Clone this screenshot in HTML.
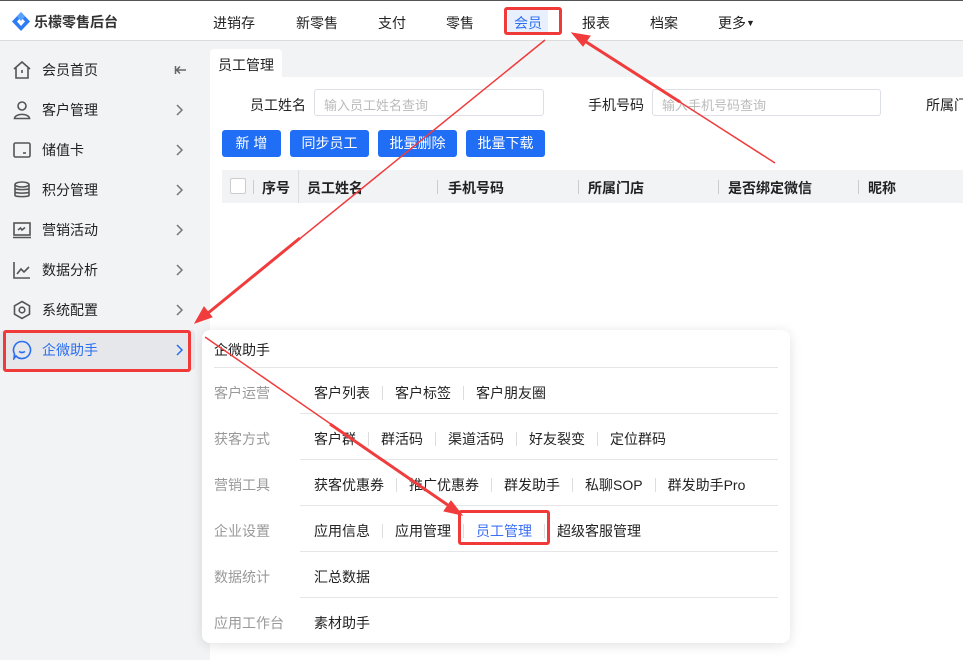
<!DOCTYPE html><html><head><meta charset="utf-8"><style>
*{margin:0;padding:0;box-sizing:border-box}
body{width:963px;height:660px;overflow:hidden;position:relative;background:#f2f3f5;font-family:"Liberation Sans","Noto Sans CJK SC",sans-serif;font-size:14px;color:#222}
.hdr{position:absolute;left:0;top:0;width:963px;height:41px;background:#fff;border-top:1px solid #555;border-bottom:1px solid #dcdcdc}
.nav{position:absolute;top:12px;font-size:14px}
.side{position:absolute;left:0;top:41px;width:210px;height:619px;background:#f2f3f5}
.si{position:absolute;left:0;width:195px;height:40px}
.si span{position:absolute;left:42px;top:10px;font-size:14px}
.si svg.ic{position:absolute;left:12px;top:10px}
.si .ch{position:absolute;left:174px;top:13px}
.main{position:absolute;left:210px;top:77px;width:753px;height:583px;background:#fff}
.tab{position:absolute;left:210px;top:49px;width:72px;height:28px;background:#fff;border-radius:4px 4px 0 0;font-size:14px;padding:6px 0 0 8px}
.lbl{position:absolute;font-size:14px;white-space:nowrap}
.inp{position:absolute;height:27px;border:1px solid #dcdfe6;border-radius:3px;background:#fff;color:#bbb;font-size:13px;padding:5px 0 0 9px}
.btn{position:absolute;top:130px;height:27px;background:#1f6ef5;color:#fff;border-radius:3px;text-align:center;font-size:14px;line-height:27px}
.th{position:absolute;left:222px;top:170px;width:741px;height:33px;background:#f2f3f5;font-weight:bold;font-size:14px}
.th span{position:absolute;top:8px}
.th i{position:absolute;top:10px;width:1px;height:14px;background:#ccc}
.pop{position:absolute;left:202px;top:330px;width:588px;height:313px;background:#fff;border-radius:8px;box-shadow:0 2px 12px rgba(0,0,0,.12)}
.pl{position:absolute;left:12px;font-size:14px;color:#999}
.pr{position:absolute;left:112px;font-size:14px;color:#222;white-space:nowrap}
.pr b{font-weight:normal;display:inline-block;width:1px;height:14px;background:#ddd;margin:0 12px;vertical-align:-2px}
.ln{position:absolute;height:1px;background:#e6e6e6;right:12px}
</style></head><body>
<div class="hdr">
<svg style="position:absolute;left:12px;top:11px" width="18" height="19" viewBox="0 0 18 19"><path d="M9 0L18 9.5 9 19 0 9.5Z" fill="#2d7cf6"/><path d="M9 5L13 9.5 9 14 5 9.5Z" fill="#fff"/><path d="M9 0L13 4.5 9 9 5 4.5Z" fill="#5aa0ff"/></svg>
<div style="position:absolute;left:34px;top:11px;font-size:14px;font-weight:bold;color:#333">乐檬零售后台</div>
<div class="nav" style="left:213px">进销存</div><div class="nav" style="left:296px">新零售</div><div class="nav" style="left:378px">支付</div><div class="nav" style="left:446px">零售</div>
<div style="position:absolute;left:508px;top:7px;width:40px;height:24px;background:#e8f0fe"></div>
<div class="nav" style="left:514px;color:#2d6ff2">会员</div><div class="nav" style="left:582px">报表</div><div class="nav" style="left:650px">档案</div><div class="nav" style="left:718px">更多<span style="font-size:9px;vertical-align:2px">▼</span></div>
<div style="position:absolute;left:504px;top:6px;width:58px;height:28px;border:3px solid #f03a3a;border-radius:3px"></div>
</div>
<div class="side">
<div class="si" style="top:9px"><svg class="ic" width="20" height="20" viewBox="0 0 20 20" fill="none" stroke="#555" stroke-width="1.6"><path d="M2 9L10 2 18 9M4 7.5V18H16V7.5"/><path d="M10 10V13"/></svg><span>会员首页</span><svg class="ch" width="14" height="14" viewBox="0 0 14 14" fill="none" stroke="#666" stroke-width="1.5"><path d="M12 7H3M6 3.5L2.5 7 6 10.5M1.5 3V11"/></svg></div>
<div class="si" style="top:49px"><svg class="ic" width="20" height="20" viewBox="0 0 20 20" fill="none" stroke="#555" stroke-width="1.6"><circle cx="10" cy="6" r="4"/><path d="M2.5 18.5C3 13 17 13 17.5 18.5Z"/></svg><span>客户管理</span><svg class="ch" width="10" height="14" viewBox="0 0 10 14" fill="none" stroke="#777" stroke-width="1.5"><path d="M3 2L8 7 3 12"/></svg></div>
<div class="si" style="top:89px"><svg class="ic" width="20" height="20" viewBox="0 0 20 20" fill="none" stroke="#555" stroke-width="1.6"><rect x="2" y="3" width="16" height="14" rx="1.5"/><path d="M11 13h3"/></svg><span>储值卡</span><svg class="ch" width="10" height="14" viewBox="0 0 10 14" fill="none" stroke="#777" stroke-width="1.5"><path d="M3 2L8 7 3 12"/></svg></div>
<div class="si" style="top:129px"><svg class="ic" width="20" height="20" viewBox="0 0 20 20" fill="none" stroke="#555" stroke-width="1.6"><ellipse cx="10" cy="4.5" rx="7" ry="2.5"/><path d="M3 4.5V15.5C3 17 17 17 17 15.5V4.5M3 8.5C3 10 17 10 17 8.5M3 12C3 13.5 17 13.5 17 12"/></svg><span>积分管理</span><svg class="ch" width="10" height="14" viewBox="0 0 10 14" fill="none" stroke="#777" stroke-width="1.5"><path d="M3 2L8 7 3 12"/></svg></div>
<div class="si" style="top:169px"><svg class="ic" width="20" height="20" viewBox="0 0 20 20" fill="none" stroke="#555" stroke-width="1.6"><rect x="2" y="3" width="16" height="12"/><path d="M1 17.5H19M6 10L8.5 8 10 10 13 7.5"/></svg><span>营销活动</span><svg class="ch" width="10" height="14" viewBox="0 0 10 14" fill="none" stroke="#777" stroke-width="1.5"><path d="M3 2L8 7 3 12"/></svg></div>
<div class="si" style="top:209px"><svg class="ic" width="20" height="20" viewBox="0 0 20 20" fill="none" stroke="#555" stroke-width="1.6"><path d="M2 2V18H18M5 14L9 9 12 12 17 7"/></svg><span>数据分析</span><svg class="ch" width="10" height="14" viewBox="0 0 10 14" fill="none" stroke="#777" stroke-width="1.5"><path d="M3 2L8 7 3 12"/></svg></div>
<div class="si" style="top:249px"><svg class="ic" width="20" height="20" viewBox="0 0 20 20" fill="none" stroke="#555" stroke-width="1.6"><path d="M10 1.5L17.5 5.8V14.2L10 18.5 2.5 14.2V5.8Z"/><circle cx="10" cy="10" r="2.8"/></svg><span>系统配置</span><svg class="ch" width="10" height="14" viewBox="0 0 10 14" fill="none" stroke="#777" stroke-width="1.5"><path d="M3 2L8 7 3 12"/></svg></div>
<div class="si" style="top:289px;background:#e6e7ea;border-radius:4px"><svg class="ic" width="20" height="20" viewBox="0 0 20 20" fill="none" stroke="#2a6ef0" stroke-width="1.6"><path d="M10 1.5A8.5 8.5 0 1 1 4 16L2 18.5 2.5 14A8.5 8.5 0 0 1 10 1.5Z"/><path d="M7 11.5Q10 13.5 13 11.5"/></svg><span style="color:#2a6ef0">企微助手</span><svg class="ch" width="10" height="14" viewBox="0 0 10 14" fill="none" stroke="#2a6ef0" stroke-width="1.5"><path d="M3 2L8 7 3 12"/></svg></div>
<div style="position:absolute;left:3px;top:289px;width:188px;height:42px;border:3px solid #f03a3a;border-radius:3px"></div>
</div>
<div class="main"></div>
<div class="tab">员工管理</div>
<div class="lbl" style="left:250px;top:95px">员工姓名</div>
<div class="inp" style="left:314px;top:89px;width:230px">输入员工姓名查询</div>
<div class="lbl" style="left:588px;top:95px">手机号码</div>
<div class="inp" style="left:652px;top:89px;width:229px">输入手机号码查询</div>
<div class="lbl" style="left:926px;top:95px">所属门</div>
<div class="btn" style="left:222px;width:59px">新 增</div>
<div class="btn" style="left:290px;width:79px">同步员工</div>
<div class="btn" style="left:378px;width:79px">批量删除</div>
<div class="btn" style="left:466px;width:79px">批量下载</div>
<div class="th">
<div style="position:absolute;left:8px;top:8px;width:16px;height:16px;border:1px solid #ccc;background:#fff;border-radius:2px"></div>
<i style="left:31px"></i><span style="left:40px">序号</span>
<div style="position:absolute;left:76px;top:0;width:1px;height:33px;background:#ddd"></div>
<span style="left:85px">员工姓名</span><i style="left:215px"></i><span style="left:226px">手机号码</span><i style="left:356px"></i><span style="left:366px">所属门店</span><i style="left:496px"></i><span style="left:506px">是否绑定微信</span><i style="left:636px"></i><span style="left:646px">昵称</span>
</div>
<div class="pop">
<div style="position:absolute;left:12px;top:10px;font-size:14px">企微助手</div>
<div class="ln" style="left:12px;top:37px"></div>
<div class="pl" style="top:53px">客户运营</div><div class="pr" style="top:53px">客户列表<b></b>客户标签<b></b>客户朋友圈</div>
<div class="ln" style="left:98px;top:83px"></div>
<div class="pl" style="top:99px">获客方式</div><div class="pr" style="top:99px">客户群<b></b>群活码<b></b>渠道活码<b></b>好友裂变<b></b>定位群码</div>
<div class="ln" style="left:98px;top:129px"></div>
<div class="pl" style="top:145px">营销工具</div><div class="pr" style="top:145px">获客优惠券<b></b>推广优惠券<b></b>群发助手<b></b>私聊SOP<b></b>群发助手Pro</div>
<div class="ln" style="left:98px;top:175px"></div>
<div class="pl" style="top:191px">企业设置</div><div class="pr" style="top:191px">应用信息<b></b>应用管理<b></b><span style="color:#3a6ff5">员工管理</span><b></b>超级客服管理</div>
<div class="ln" style="left:98px;top:221px"></div>
<div class="pl" style="top:237px">数据统计</div><div class="pr" style="top:237px">汇总数据</div>
<div class="ln" style="left:98px;top:267px"></div>
<div class="pl" style="top:283px">应用工作台</div><div class="pr" style="top:283px">素材助手</div>
</div>
<div style="position:absolute;left:458px;top:510px;width:92px;height:35px;border:3px solid #f03a3a;border-radius:3px"></div>
<svg style="position:absolute;left:0;top:0" width="963" height="660">
<g stroke="#f03c3c" fill="#f03c3c">
<line x1="545" y1="40" x2="202" y2="318" stroke-width="1.5"/><line x1="300" y1="238" x2="202" y2="318" stroke-width="3"/><path d="M195 323L204 307 212 317Z"/>
<line x1="775" y1="163" x2="580" y2="38" stroke-width="1.5"/><line x1="680" y1="102" x2="580" y2="38" stroke-width="3"/><path d="M572 33L590 36 583 46Z"/>
<line x1="205" y1="337" x2="455" y2="510" stroke-width="1.5"/><line x1="330" y1="424" x2="455" y2="510" stroke-width="3"/><path d="M462 515L444 511 451 501Z"/>
</g></svg>
</body></html>
